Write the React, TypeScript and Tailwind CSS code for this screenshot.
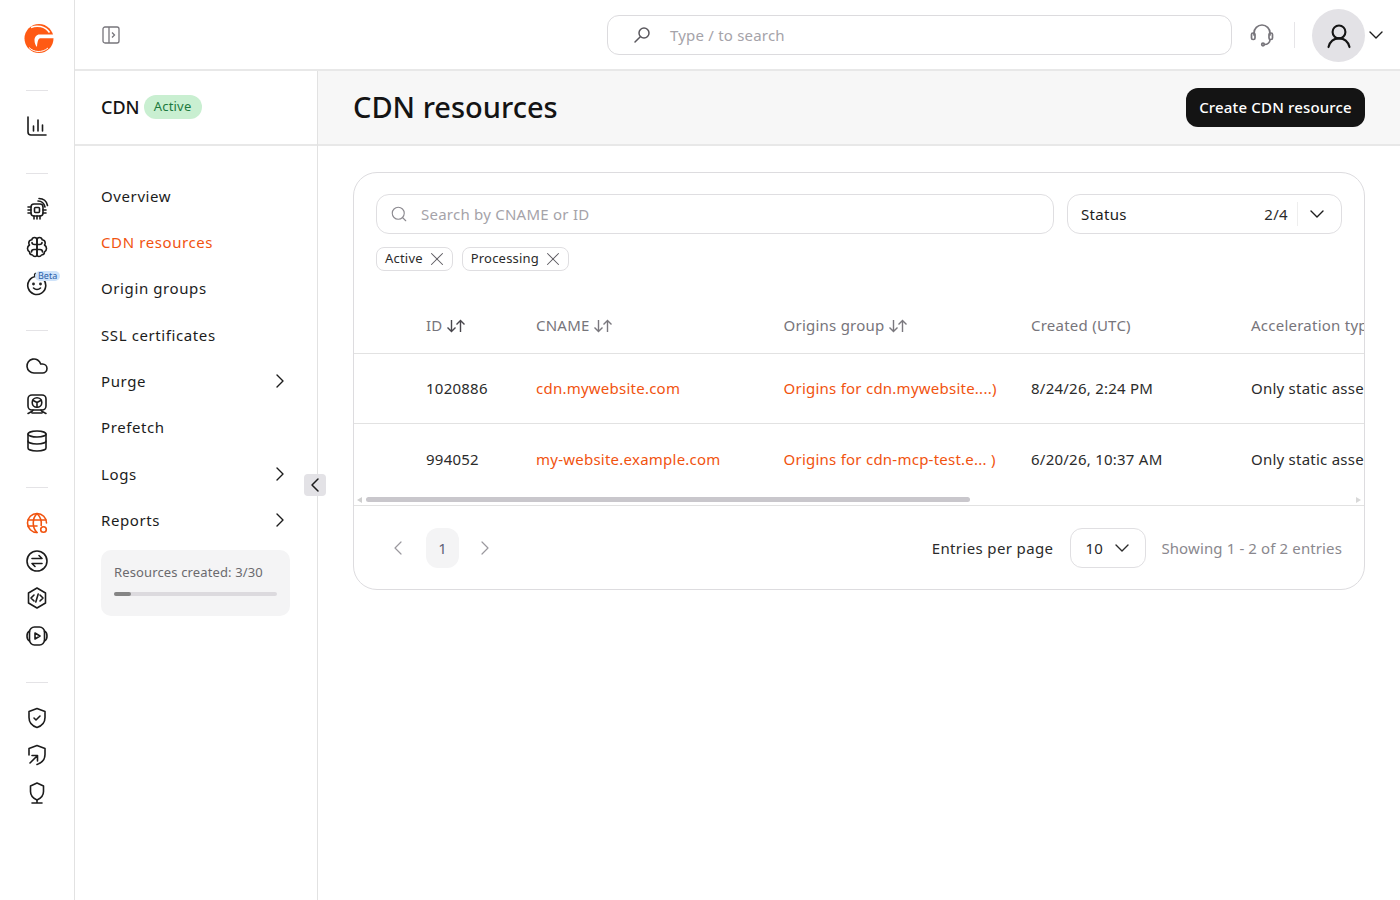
import type { ReactNode } from 'react';
import { ChevronDown, ChevronLeft, ChevronRight, Cloud, Database, Search, X } from 'lucide-react';

function Ico({ children, className = 'text-[#1c1c1c]' }: { children: ReactNode; className?: string }) {
  return (
    <svg viewBox="0 0 24 24" fill="none" stroke="currentColor" strokeWidth="1.6" strokeLinecap="round" strokeLinejoin="round" className={`h-6 w-6 ${className}`}>
      {children}
    </svg>
  );
}

function Logo() {
  return (
    <svg viewBox="0 0 30 33" className="ml-[4px] h-[33px] w-[30px]">
      <circle cx="15" cy="16.500" r="14.500" fill="#ff5a14" />
      <path d="M7 5.500C13 2.800 21 4 25.500 10.500" fill="none" stroke="#fff" strokeWidth="1.500" />
      <path d="M30 12.500H15.500C12.500 12.500 10.500 15 10.500 18c0 3 1 5.500 2.500 7 .2-3 .5-5.500 1.500-7.500.5-1 1.200-1.300 2.500-1.300H30z" fill="#fff" />
      <path d="M5 25.500c5 5 13 5.500 19 .5" fill="none" stroke="#fff" strokeWidth="1" />
    </svg>
  );
}

function Rule() {
  return <div className="h-px w-[22px] bg-[#e4e3e6]" />;
}

function RailGroup({ children }: { children: ReactNode }) {
  return <div className="flex flex-col items-center gap-[13.5px]">{children}</div>;
}

const brainLobe = 'M12 5C12 3.500 10.800 2.500 9.500 2.500 8 2.500 7 3.500 6.800 4.800 5 5 3.800 6.300 3.800 8c0 .8.2 1.500.7 2C3.300 10.800 2.500 12 2.500 13.500c0 1.500.8 2.500 2 3.300 0 2 1.500 3.200 3 3.200.5 1 1.500 1.500 2.500 1.500 1.200 0 2-1 2-2z';
const brainFolds = 'M12 9.500H9.500C8 9.500 7 8.500 7 7.500M12 14.500H9c-1.500 0-2.500 1-2.500 2.500';

function Rail() {
  return (
    <aside className="flex w-[75px] shrink-0 flex-col items-center border-r border-[#e2e2e2] bg-white pt-[22px]">
      <Logo />
      <div className="mt-[35px]"><Rule /></div>
      <div className="mt-[23px]">
        <Ico>
          <path d="M3 3v15a3 3 0 0 0 3 3h15" />
          <path d="M8.500 12v5M13 6v11M17.500 11v6" />
        </Ico>
      </div>
      <div className="mt-[35px]"><Rule /></div>
      <div className="mt-[23px]">
        <RailGroup>
          <Ico>
            <rect x="6" y="7" width="12" height="12" rx="3" />
            <rect x="9.500" y="10.500" width="5" height="5" rx="1" />
            <path d="M3 10h3M3 13h3M3 16h3M9 19v3M12 19v3M15 19v3M18 13h3M18 16h3" />
            <path d="M13 4c3 0 6 2 7 6M14 1.500c4 0 7.500 2.500 8.500 7" />
          </Ico>
          <Ico>
            <path d={brainLobe} />
            <path d={brainFolds} />
            <g transform="matrix(-1 0 0 1 24 0)">
              <path d={brainLobe} />
              <path d={brainFolds} />
            </g>
          </Ico>
          <div className="relative h-6 w-6">
            <Ico>
              <path d="M11 4.500a9 9 0 1 0 7 2.500" />
              <path d="M11 4.500C9.500 4 9 2.500 10.500 1.500" />
              <circle cx="8.500" cy="12" r=".6" fill="currentColor" />
              <circle cx="15.500" cy="12" r=".6" fill="currentColor" />
              <path d="M8.500 16c2 1.800 5 1.800 7 0" />
            </Ico>
            <span className="absolute left-[10px] top-[-1px] rounded-full bg-[#cfe3fa] px-[3px] text-[9px] leading-[10px] text-[#2a5ea8]">Beta</span>
          </div>
        </RailGroup>
      </div>
      <div className="mt-[34px]"><Rule /></div>
      <div className="mt-[23px]">
        <RailGroup>
          <Cloud className="h-6 w-6 text-[#1c1c1c]" strokeWidth={1.6} />
          <Ico>
            <rect x="3" y="3" width="18" height="15" rx="4" />
            <circle cx="12" cy="10.500" r="4.800" />
            <path d="M12 10.500V15.300M12 10.500l-4.200-2.300M12 10.500l4.200-2.300" />
            <path d="M3 21.500c3-1.500 5-2.200 5-3.500M21 21.500c-3-1.500-5-2.200-5-3.500M7 21h10" />
          </Ico>
          <Database className="h-6 w-6 text-[#1c1c1c]" strokeWidth={1.6} />
        </RailGroup>
      </div>
      <div className="mt-[34px]"><Rule /></div>
      <div className="mt-[23px]">
        <RailGroup>
          <Ico className="text-[#f1530f]">
            <path d="M21.500 12a9.500 9.500 0 1 0-9.500 9.500" />
            <path d="M12 2.500c-5 5-5 14 0 19M12 2.500c3.500 3.500 4.800 8 4.200 12" />
            <path d="M3 9h18M3 15h9" />
            <circle cx="18.500" cy="18.500" r="2.800" />
          </Ico>
          <Ico>
            <circle cx="12" cy="12" r="10" />
            <path d="M7 9.500h10M14 6.500l3 3M17 14.500H7M10 17.500l-3-3" />
          </Ico>
          <Ico>
            <path d="M12 2l8.500 5v10L12 22l-8.500-5V7z" />
            <path d="M9 9l-3 3 3 3M15 9l3 3-3 3M13.200 8l-2.400 8" />
          </Ico>
          <Ico>
            <rect x="4.500" y="3" width="15" height="18" rx="5" />
            <path d="M4.500 7C2.500 8 2 10 2 12s.5 4 2.500 5M19.500 7c2 1 2.500 3 2.500 5s-.5 4-2.500 5" />
            <path d="M10 9l5 3-5 3z" />
          </Ico>
        </RailGroup>
      </div>
      <div className="mt-[34px]"><Rule /></div>
      <div className="mt-[23px]">
        <RailGroup>
          <Ico>
            <path d="M12 2.500l8 3v6c0 5-3.500 8.500-8 10-4.500-1.500-8-5-8-10v-6z" />
            <path d="M9 12l2 2 4-4" />
          </Ico>
          <Ico>
            <path d="M4 12V5.500l8-3 8 3v6c0 5-3.500 8.500-8 10" />
            <path d="M5 20l7-7M7 12.500h5.500V18" />
          </Ico>
          <Ico>
            <path d="M12 2l6.500 3v5.500c0 4-3 7-6.500 8.500-3.500-1.500-6.500-4.500-6.500-8.500V5z" />
            <path d="M12 19v3M7 22h10" />
          </Ico>
        </RailGroup>
      </div>
    </aside>
  );
}

function NavItem({ label, active, arrow }: { label: string; active?: boolean; arrow?: boolean }) {
  return (
    <div className={`flex h-[46.3px] items-center justify-between pr-[25px] text-[15px] tracking-[0.6px] ${active ? 'text-[#f1530f]' : 'text-[#1c1c1c]'}`}>
      <span>{label}</span>
      {arrow && <ChevronRight className="h-6 w-6 text-[#1c1c1c]" strokeWidth={1.4} />}
    </div>
  );
}

function Sidebar() {
  return (
    <aside className="relative w-[243px] shrink-0 border-r border-[#e2e2e2] bg-white">
      <div className="flex h-[75px] items-center gap-[4px] border-b-2 border-[#e8e8e8] pb-[2px] pl-[26px]">
        <span className="mt-[2px] text-[18px] font-medium text-[#141414]">CDN</span>
        <span className="flex h-6 w-[58px] items-center justify-center rounded-full bg-[#c9efd1] text-[13px] tracking-[0.2px] text-[#1d7a3e]">Active</span>
      </div>
      <nav className="pl-[26px] pt-[27px]">
        <NavItem label="Overview" />
        <NavItem label="CDN resources" active />
        <NavItem label="Origin groups" />
        <NavItem label="SSL certificates" />
        <NavItem label="Purge" arrow />
        <NavItem label="Prefetch" />
        <NavItem label="Logs" arrow />
        <NavItem label="Reports" arrow />
      </nav>
      <div className="ml-[26px] mt-[7px] h-[66px] w-[189px] rounded-[10px] bg-[#f4f4f5] px-[13px] pt-[12px]">
        <div className="text-[13px] leading-[20px] tracking-[0.13px] text-[#6b6a6e]">Resources created: 3/30</div>
        <div className="mt-[10px] h-1 w-full rounded-full bg-[#dcdade]">
          <div className="h-1 w-[17px] rounded-full bg-[#858585]" />
        </div>
      </div>
      <button className="absolute left-[229px] top-[403px] flex h-[22px] w-[22px] items-center justify-center rounded-[4px] bg-[#e3e2e6]">
        <ChevronLeft className="h-6 w-6 shrink-0 text-[#1c1c1c]" strokeWidth={1.5} />
      </button>
    </aside>
  );
}

function TopBar() {
  return (
    <header className="flex h-[71px] items-center border-b-2 border-[#e8e8e8] bg-white pl-[27px]">
      <svg viewBox="0 0 18 18" fill="none" stroke="#77757b" strokeWidth="1.300" className="h-[18px] w-[18px]">
        <rect x="1" y="1" width="16" height="16" rx="2" />
        <path d="M7 1v16M10 6.500L12.500 9 10 11.500" />
      </svg>
      <div className="ml-[487px] flex h-10 w-[625px] items-center rounded-xl border border-[#dcdbde] pl-[25px]">
        <svg viewBox="0 0 18 18" fill="none" stroke="#5a585e" strokeWidth="1.500" strokeLinecap="round" className="h-[18px] w-[18px]">
          <circle cx="11" cy="7" r="5" />
          <path d="M7.300 10.700L2 16" />
        </svg>
        <span className="ml-[19px] pt-[2px] text-[15px] tracking-[0.2px] text-[#a5a3a9]">Type / to search</span>
      </div>
      <svg viewBox="0 0 24 24" fill="none" stroke="#77757b" strokeWidth="1.700" strokeLinecap="round" className="ml-[18px] h-6 w-6">
        <path d="M4 12V10a8 8 0 0 1 16 0v2" />
        <rect x="1.500" y="10" width="3.500" height="6.500" rx="1.500" />
        <rect x="19" y="10" width="3.500" height="6.500" rx="1.500" />
        <path d="M20 16.500c0 3-2.500 5-5.500 5" />
        <circle cx="13" cy="21.500" r="1.300" />
      </svg>
      <div className="ml-5 h-[26px] w-px bg-[#e6e5e8]" />
      <div className="ml-[17px] mt-[2px] flex h-[53px] w-[53px] shrink-0 items-center justify-center rounded-full bg-[#e3e2e6]">
        <svg viewBox="0 0 24 24" fill="none" stroke="#141414" strokeWidth="1.800" strokeLinecap="round" className="h-7 w-7">
          <circle cx="12" cy="8.500" r="5.500" />
          <path d="M3 21.500c1-4 4-7.500 9-7.500s8 3.500 9 7.500" />
        </svg>
      </div>
      <ChevronDown className="-ml-[1px] h-6 w-6 shrink-0 text-[#1c1c1c]" strokeWidth={1.4} />
    </header>
  );
}

function SortArrows({ dark }: { dark?: boolean }) {
  return (
    <svg viewBox="0 0 20 14" fill="none" stroke={dark ? '#48464c' : '#7a787e'} strokeWidth="1.400" className="ml-[3px] h-[14px] w-5">
      <path d="M5.500 1v11.500M1.500 8.500l4 4 4-4" />
      <path d="M14.500 13V1.500M10.500 5.500l4-4 4 4" />
    </svg>
  );
}

function Row({ id, cname, group, created, last }: { id: string; cname: string; group: string; created: string; last?: boolean }) {
  return (
    <div className={`flex h-[70px] w-[1200px] items-center pl-[72px] text-[15px] tracking-[0.24px] text-[#2b2b2b] ${last ? '' : 'border-b border-[#e2e2e2]'}`}>
      <div className="w-[110px]">{id}</div>
      <div className="w-[247.500px] text-[#f1530f]">{cname}</div>
      <div className="w-[247.500px] text-[#f1530f]">{group}</div>
      <div className="w-[220px]">{created}</div>
      <div>Only static assets</div>
    </div>
  );
}

function Chip({ label }: { label: string }) {
  return (
    <div className="flex h-6 items-center rounded-[8px] border border-[#dfdee1] pl-[8px] pr-[4px] text-[13px] tracking-[0.2px] text-[#2b2b2b]">
      <span>{label}</span>
      <X className="ml-[3px] h-[22px] w-[22px] text-[#5d5b61]" strokeWidth={1.1} />
    </div>
  );
}

function ResourcesCard() {
  return (
    <section className="h-[418px] overflow-hidden rounded-[24px] border border-[#dddcdf] bg-white">
      <div className="flex gap-[13px] pl-[22px] pr-[22px] pt-[21px]">
        <div className="flex h-10 w-[678px] items-center rounded-[13px] border border-[#dfdee1] pl-[13px]">
          <Search className="h-[18px] w-[18px] text-[#8c8a90]" strokeWidth={1.5} />
          <span className="ml-[13px] text-[15px] tracking-[0.24px] text-[#a5a3a9]">Search by CNAME or ID</span>
        </div>
        <div className="flex h-10 w-[275px] items-center rounded-[13px] border border-[#dfdee1] pl-[13px] text-[15px] tracking-[0.3px] text-[#1c1c1c]">
          <span>Status</span>
          <span className="ml-auto text-[#2b2b2b]">2/4</span>
          <div className="ml-[9px] h-[24px] w-px bg-[#eeeeee]" />
          <ChevronDown className="ml-[7px] mr-[12px] h-6 w-6 shrink-0" strokeWidth={1.4} />
        </div>
      </div>
      <div className="mt-[13px] flex gap-[9px] pl-[22px]">
        <Chip label="Active" />
        <Chip label="Processing" />
      </div>
      <div className="mt-[28px] overflow-hidden">
        <div className="flex h-[55px] w-[1200px] items-center border-b border-[#e2e2e2] pb-[1px] pl-[72px] text-[15px] tracking-[0.24px] text-[#77757b]">
          <div className="flex w-[110px] items-center">ID<SortArrows dark /></div>
          <div className="flex w-[247.500px] items-center">CNAME<SortArrows /></div>
          <div className="flex w-[247.500px] items-center">Origins group<SortArrows /></div>
          <div className="w-[220px]">Created (UTC)</div>
          <div>Acceleration type</div>
        </div>
        <Row id="1020886" cname="cdn.mywebsite.com" group="Origins for cdn.mywebsite....)" created="8/24/26, 2:24 PM" />
        <Row id="994052" cname="my-website.example.com" group="Origins for cdn-mcp-test.e... )" created="6/20/26, 10:37 AM" last />
        <div className="flex h-[12px] items-center border-b border-[#e2e2e2]">
          <div className="ml-[3px] h-0 w-0 border-y-[3px] border-r-[5px] border-y-transparent border-r-[#cfcfcf]" />
          <div className="ml-[4px] h-[5px] w-[604px] rounded-full bg-[#c9c7cc]" />
          <div className="ml-auto mr-[3px] h-0 w-0 border-y-[3px] border-l-[5px] border-y-transparent border-l-[#d8d8d8]" />
        </div>
      </div>
      <div className="flex items-center pl-[32px] pr-[22px] pt-[22px]">
        <ChevronLeft className="h-6 w-6 text-[#9a989e]" strokeWidth={1.2} />
        <div className="ml-[16px] flex h-10 w-[33px] items-center justify-center rounded-[12px] bg-[#f4f4f5] text-[15px] text-[#5d6178]">1</div>
        <ChevronRight className="ml-[14px] h-6 w-6 text-[#9a989e]" strokeWidth={1.2} />
        <span className="ml-auto text-[15px] tracking-[0.37px] text-[#2b2b2b]">Entries per page</span>
        <div className="ml-[17px] flex h-10 w-[76px] items-center rounded-[12px] border border-[#e0dfe2] pl-[14px] text-[15px] tracking-[0.3px] text-[#2b2b2b]">
          <span>10</span>
          <ChevronDown className="ml-[7px] h-6 w-6 shrink-0" strokeWidth={1.4} />
        </div>
        <span className="ml-[15px] text-[15px] tracking-[0.12px] text-[#8a888e]">Showing 1 - 2 of 2 entries</span>
      </div>
    </section>
  );
}

export default function App() {
  return (
    <div className="flex h-[900px] w-[1400px] overflow-hidden bg-white font-['Noto_Sans',sans-serif]">
      <Rail />
      <div className="flex min-w-0 flex-1 flex-col">
        <TopBar />
        <div className="flex min-h-0 flex-1">
          <Sidebar />
          <main className="min-w-0 flex-1">
            <div className="flex h-[75px] items-center justify-between border-b-2 border-[#e8e8e8] bg-[#f7f7f7] pb-[2px] pl-[35px] pr-[35px]">
              <h1 className="text-[29px] font-medium text-[#141414]">CDN resources</h1>
              <button className="mt-[2px] h-[39px] w-[179px] rounded-xl bg-[#141414] text-[15px] font-medium tracking-[0.16px] text-white">Create CDN resource</button>
            </div>
            <div className="pl-[35px] pr-[35px] pt-[26px]">
              <ResourcesCard />
            </div>
          </main>
        </div>
      </div>
    </div>
  );
}
